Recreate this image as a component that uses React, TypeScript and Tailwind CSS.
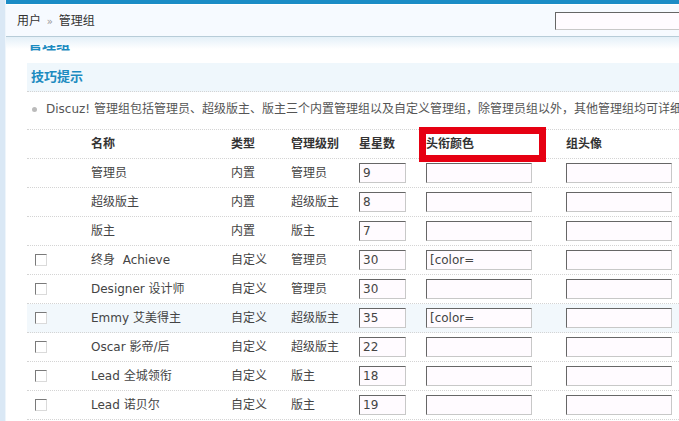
import React from 'react';

type Row = {
  name: string;
  type: string;
  level: string;
  stars: string;
  color: string;
  custom: boolean;
  hover?: boolean;
};

const rows: Row[] = [
  { name: '管理员', type: '内置', level: '管理员', stars: '9', color: '', custom: false },
  { name: '超级版主', type: '内置', level: '超级版主', stars: '8', color: '', custom: false },
  { name: '版主', type: '内置', level: '版主', stars: '7', color: '', custom: false },
  { name: '终身\u00a0 Achieve', type: '自定义', level: '管理员', stars: '30', color: '[color=', custom: true },
  { name: 'Designer 设计师', type: '自定义', level: '管理员', stars: '30', color: '', custom: true },
  { name: 'Emmy 艾美得主', type: '自定义', level: '超级版主', stars: '35', color: '[color=', custom: true, hover: true },
  { name: 'Oscar 影帝/后', type: '自定义', level: '超级版主', stars: '22', color: '', custom: true },
  { name: 'Lead 全城领衔', type: '自定义', level: '版主', stars: '18', color: '', custom: true },
  { name: 'Lead 诺贝尔', type: '自定义', level: '版主', stars: '19', color: '', custom: true },
];

const cols = 'grid grid-cols-[64px_140px_60px_68px_67px_140px_140px] items-center';

function Field({ value, width }: { value: string; width: string }) {
  return (
    <div
      className={`${width} h-[20px] bg-[#fffbff] border border-t-[#666] border-l-[#666] border-b-[#c8c8c8] border-r-[#c8c8c8] pl-[3px] text-[12px] leading-[18px] text-[#444] whitespace-nowrap overflow-hidden`}
    >
      {value}
    </div>
  );
}

function Checkbox() {
  return (
    <span className="block ml-[8px] w-[12px] h-[12px] bg-white border border-t-[#7a7a7a] border-l-[#7a7a7a] border-b-[#dadada] border-r-[#dadada]" />
  );
}

export default function App() {
  return (
    <div className="w-[679px] h-[421px] overflow-hidden flex bg-white text-[12px] text-[#444] font-['DejaVu_Sans','Noto_Sans_CJK_SC',sans-serif]">
      {/* left frame strip */}
      <div className="w-[6px] shrink-0 bg-[#dae8f5] border-r border-[#eef5fb]" />

      <div className="flex-1 flex flex-col min-w-0">
        {/* top blue bar */}
        <div className="h-[5px] shrink-0 bg-[#1b8cc6] border-b border-white" />

        {/* breadcrumb header */}
        <div className="h-[32px] shrink-0 bg-[#f6faff] border-b border-[#b7ccd8] flex items-center justify-between pl-[11px]">
          <div className="text-[#333] whitespace-nowrap">
            用户 <span className="text-[#999] text-[10px] px-[2px]">»</span> 管理组
          </div>
          <div className="w-[140px] h-[18px] shrink-0 -mr-[16px] bg-[#fffbff] border border-t-[#666] border-l-[#666] border-b-[#c8c8c8] border-r-[#c8c8c8]" />
        </div>

        {/* content */}
        <div className="flex-1 min-h-0 overflow-hidden pl-[21px] bg-[linear-gradient(#e4f0f8,#ffffff_12px)]">
          {/* heading scrolled under the header */}
          <div className="h-[26px] pt-[8px] pl-[1px]">
            <div className="h-[6px] overflow-hidden">
              <div className="-mt-[8px] text-[14px] leading-[14px] font-bold text-[#1c8bc0] whitespace-nowrap">管理组</div>
            </div>
          </div>

          {/* tips title */}
          <div className="h-[29px] bg-[#eff7fc] border-b border-dotted border-[#d4d4d4] flex items-center pl-[4px] font-bold text-[13px] text-[#1c8bc0]">
            技巧提示
          </div>

          {/* tip line */}
          <div className="h-[38px] border-b border-dotted border-[#d4d4d4] flex items-start pt-[8px] pl-[5px] whitespace-nowrap overflow-hidden">
            <span className="w-[5px] h-[5px] mt-[7px] rounded-full bg-[#bbb] shrink-0" />
            <span className="ml-[9px] leading-[18px] text-[#555]">
              Discuz! 管理组包括管理员、超级版主、版主三个内置管理组以及自定义管理组，除管理员组以外，其他管理组均可详细设置
            </span>
          </div>

          {/* table header */}
          <div className={`${cols} h-[29px] border-b border-dotted border-[#d4d4d4] font-bold text-[#333]`}>
            <div />
            <div>名称</div>
            <div>类型</div>
            <div>管理级别</div>
            <div>星星数</div>
            <div className="relative self-stretch flex items-center">
              <div className="absolute -left-[7px] -top-[3px] w-[127px] h-[35px] border-[7px] border-[#e60012]" />
              <span className="relative">头衔颜色</span>
            </div>
            <div>组头像</div>
          </div>

          {/* rows */}
          {rows.map((r, i) => (
            <div
              key={i}
              className={`${cols} h-[29px] border-b border-dotted border-[#d4d4d4] ${r.hover ? 'bg-[#f2f8fc]' : ''}`}
            >
              <div>{r.custom ? <Checkbox /> : null}</div>
              <div className="whitespace-nowrap">{r.name}</div>
              <div className="whitespace-nowrap">{r.type}</div>
              <div className="whitespace-nowrap">{r.level}</div>
              <div>
                <Field value={r.stars} width="w-[47px]" />
              </div>
              <div>
                <Field value={r.color} width="w-[106px]" />
              </div>
              <div>
                <Field value="" width="w-[106px]" />
              </div>
            </div>
          ))}
        </div>
      </div>
    </div>
  );
}
